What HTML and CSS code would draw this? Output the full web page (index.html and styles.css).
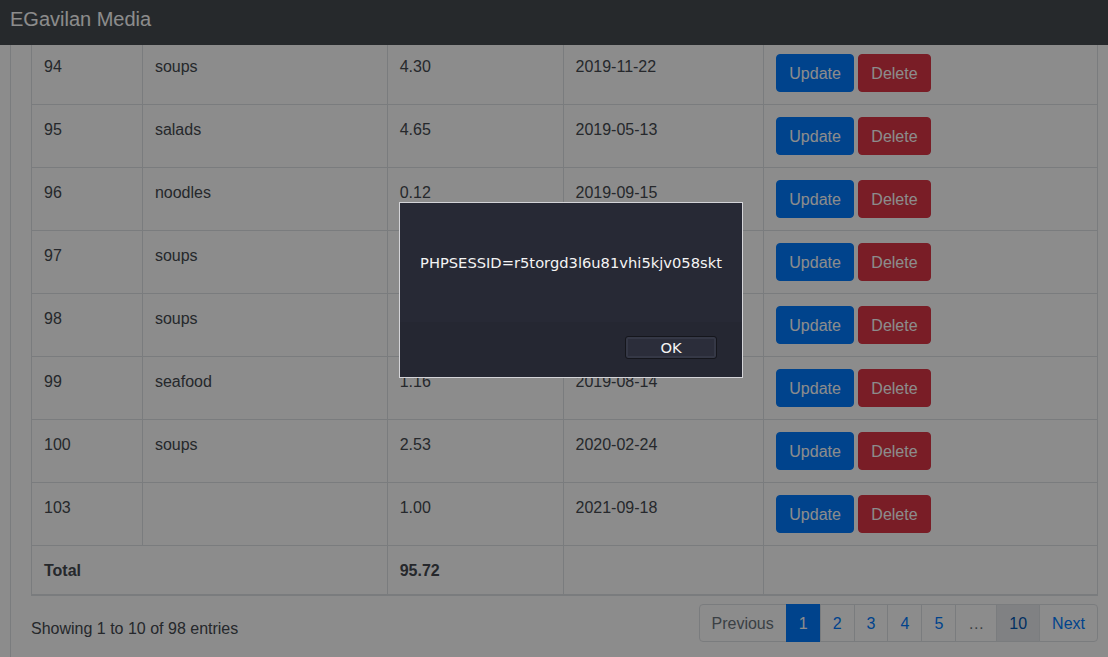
FILE: index.html
```html
<!DOCTYPE html>
<html>
<head>
<meta charset="utf-8">
<link rel="stylesheet" href="styles.css">
</head>
<body>
<nav class="navbar"><span class="brand">EGavilan Media</span></nav>
<main class="page">
  <table class="grid">
    <colgroup>
      <col class="c1"><col class="c2"><col class="c3"><col class="c4"><col class="c5">
    </colgroup>
    <tbody>
      <tr><td>94</td><td>soups</td><td>4.30</td><td>2019-11-22</td><td class="act"><button class="btn upd">Update</button> <button class="btn del">Delete</button></td></tr>
      <tr><td>95</td><td>salads</td><td>4.65</td><td>2019-05-13</td><td class="act"><button class="btn upd">Update</button> <button class="btn del">Delete</button></td></tr>
      <tr><td>96</td><td>noodles</td><td>0.12</td><td>2019-09-15</td><td class="act"><button class="btn upd">Update</button> <button class="btn del">Delete</button></td></tr>
      <tr><td>97</td><td>soups</td><td>3.11</td><td>2019-10-02</td><td class="act"><button class="btn upd">Update</button> <button class="btn del">Delete</button></td></tr>
      <tr><td>98</td><td>soups</td><td>2.40</td><td>2019-07-30</td><td class="act"><button class="btn upd">Update</button> <button class="btn del">Delete</button></td></tr>
      <tr><td>99</td><td>seafood</td><td>1.16</td><td>2019-08-14</td><td class="act"><button class="btn upd">Update</button> <button class="btn del">Delete</button></td></tr>
      <tr><td>100</td><td>soups</td><td>2.53</td><td>2020-02-24</td><td class="act"><button class="btn upd">Update</button> <button class="btn del">Delete</button></td></tr>
      <tr><td>103</td><td></td><td>1.00</td><td>2021-09-18</td><td class="act"><button class="btn upd">Update</button> <button class="btn del">Delete</button></td></tr>
    </tbody>
    <tfoot>
      <tr><th colspan="2">Total</th><th>95.72</th><th></th><th></th></tr>
    </tfoot>
  </table>
  <div class="footer">
    <div class="info">Showing 1 to 10 of 98 entries</div>
    <ul class="pager">
      <li class="pg disabled">Previous</li>
      <li class="pg active">1</li>
      <li class="pg">2</li>
      <li class="pg">3</li>
      <li class="pg">4</li>
      <li class="pg">5</li>
      <li class="pg ell">…</li>
      <li class="pg hover">10</li>
      <li class="pg">Next</li>
    </ul>
  </div>
</main>
<div class="backdrop"></div>
<div class="dialog">
  <div class="msg">PHPSESSID=r5torgd3l6u81vhi5kjv058skt</div>
  <div class="actions"><button class="ok">OK</button></div>
</div>
</body>
</html>
```
FILE: styles.css
```css
* { box-sizing: border-box; }
html, body { margin: 0; padding: 0; }
body {
  font-family: "Liberation Sans", Arial, sans-serif;
  font-size: 16px;
  line-height: 1.5;
  color: #454a50;
  background: #fff;
  height: 657px;
  overflow: hidden;
}
.navbar {
  position: fixed;
  top: 0; left: 0; right: 0;
  height: 45px;
  background: #454b50;
  padding: 4px 10px 0;
  z-index: 2;
}
.brand {
  color: #fff;
  font-size: 20px;
  line-height: 30px;
}
.page {
  margin: 41px 0 0 10px;
  border-left: 1px solid #dee2e6;
  padding: 0 10px 0 20px;
  height: 700px;
}
.grid {
  width: 1067px;
  border-collapse: collapse;
  border: 1px solid #dee2e6;
}
.c1 { width: 111px; }
.c2 { width: 245px; }
.c3 { width: 176px; }
.c4 { width: 201px; }
.c5 { width: 334px; }
.grid td, .grid th {
  border: 1px solid #dee2e6;
  padding: 13px 12px 11px;
  vertical-align: top;
  text-align: left;
  height: 63px;
}
.grid td.act { padding: 12px; }
.grid tfoot th {
  height: 49px;
  font-weight: bold;
  border-bottom: 2px solid #dee2e6;
}
.btn {
  font-family: inherit;
  font-size: 16px;
  line-height: 24px;
  padding: 7px 12px 5px;
  border: 1px solid transparent;
  border-radius: 4px;
  color: #fff;
  vertical-align: top;
  margin: 0;
}
.upd { background: #007bff; border-color: #007bff; }
.del { background: #dc3545; border-color: #dc3545; }
.footer {
  width: 1067px;
  display: flex;
  justify-content: space-between;
  align-items: flex-start;
  margin-top: 8px;
}
.info { padding-top: 13px; }
.pager {
  display: flex;
  list-style: none;
  margin: 0;
  padding: 0;
}
.pg {
  padding: 8px 12px 6px;
  line-height: 22px;
  border: 1px solid #dee2e6;
  margin-left: -1px;
  color: #007bff;
  background: #fff;
}
.pg:first-child { border-radius: 4px 0 0 4px; margin-left: 0; }
.pg:last-child { border-radius: 0 4px 4px 0; }
.pg.disabled { color: #6c757d; }
.pg.active { background: #007bff; border-color: #007bff; color: #fff; }
.pg.ell { color: #6c757d; }
.pg.hover { background: #e9ecef; color: #0056b3; }
.backdrop {
  position: fixed;
  inset: 0;
  background: rgba(0, 0, 0, 0.45);
  z-index: 5;
}
.dialog {
  position: fixed;
  left: 399px;
  top: 202px;
  width: 344px;
  height: 176px;
  background: #272935;
  border: 1px solid #d4d4d8;
  z-index: 6;
  display: flex;
  flex-direction: column;
  font-family: "DejaVu Sans", sans-serif;
  color: #f4f4f4;
}
.msg {
  flex: 1;
  font-size: 14.7px;
  padding-top: 49px;
  text-align: center;
}
.actions {
  height: 55px;
  background: #252732;
  display: flex;
  justify-content: flex-end;
  align-items: flex-start;
  padding: 14px 25px 0 0;
}
.ok {
  width: 92px;
  height: 23px;
  background: #2b2d3a;
  border: 1px solid #15161c;
  border-radius: 3px;
  box-shadow: inset 0 0 0 2px #353846;
  color: #f4f4f4;
  font-family: "DejaVu Sans", sans-serif;
  font-size: 14.7px;
  padding: 0;
  line-height: 20px;
}
```
